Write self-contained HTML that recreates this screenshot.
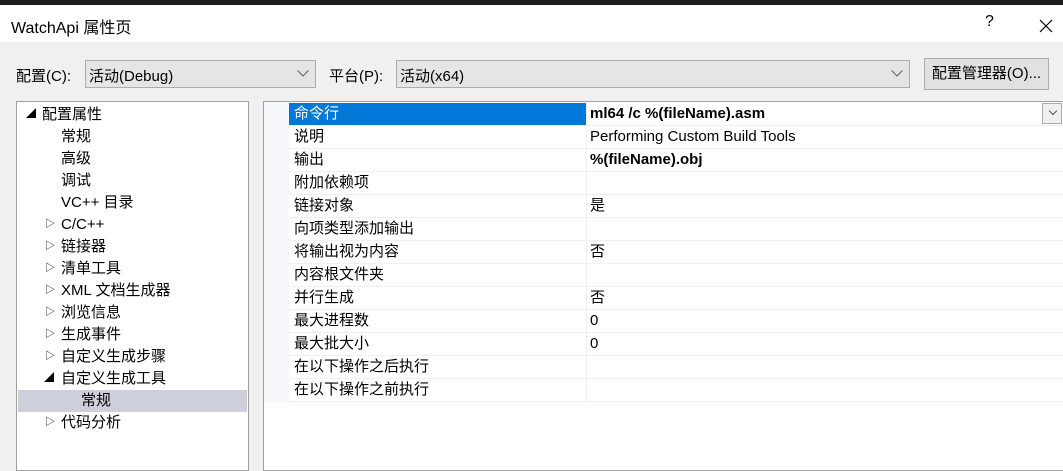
<!DOCTYPE html>
<html><head><meta charset="utf-8"><style>
*{margin:0;padding:0;box-sizing:border-box}
body{width:1063px;height:460px;overflow:hidden;background:#f0f0f0;position:relative;font-family:"Liberation Sans","Microsoft YaHei","Noto Sans CJK SC",sans-serif;font-size:15px;color:#000}
.a{position:absolute}
.top{left:0;top:0;width:1063px;height:5px;background:#1f1f1f}
.title{left:0;top:5px;width:1063px;height:37px;background:#fff}
.combo{background:#e5e5e5;border:1px solid #adadad;height:28px;top:60px}
.chev{position:absolute;right:8px;top:6px;width:8px;height:8px;border-right:1px solid #555;border-bottom:1px solid #555;transform:rotate(45deg)}
.tree{left:16px;top:101px;width:233px;height:370px;background:#fff;border:1px solid #a0a0a0}
.ti{position:absolute;left:0;height:22px;line-height:22px;width:229px;white-space:nowrap}
.grid{left:263px;top:101px;width:810px;height:370px;background:#fff;border:1px solid #a0a0a0}
.row{position:absolute;left:25px;width:780px;height:23px;border-bottom:1px solid #eef0f4;line-height:22px}
.n{position:absolute;left:5px}
.v{position:absolute;left:297px;top:0;height:22px;border-left:1px solid #eef0f4;padding-left:3px;width:480px}
</style></head><body>
<div class="a top"></div>
<div class="a title"><span class="a" style="left:11px;top:9px;font-size:16px">WatchApi 属性页</span>
<span class="a" style="left:985px;top:8px;font-size:16px">?</span>
<svg class="a" style="left:1039px;top:14px" width="14" height="14"><path d="M1 1L13 13M13 1L1 13" stroke="#000" stroke-width="1.2"/></svg></div>
<span class="a" style="left:16px;top:65px">配置(C):</span>
<div class="a combo" style="left:85px;width:231px"><span class="a" style="left:3px;top:4px">活动(Debug)</span><div class="chev"></div></div>
<span class="a" style="left:329px;top:65px">平台(P):</span>
<div class="a combo" style="left:396px;width:514px"><span class="a" style="left:3px;top:4px">活动(x64)</span><div class="chev"></div></div>
<div class="a" style="left:924px;top:58px;width:125px;height:32px;background:#e1e1e1;border:1px solid #adadad;text-align:center;line-height:30px">配置管理器(O)...</div>
<div class="a tree">
<div class="ti" style="top:2px"><span class="a" style="left:9px;top:0;font-size:10px">◢</span><span class="a" style="left:25px">配置属性</span></div>
<div class="ti" style="top:24px"><span class="a" style="left:44px">常规</span></div>
<div class="ti" style="top:46px"><span class="a" style="left:44px">高级</span></div>
<div class="ti" style="top:68px"><span class="a" style="left:44px">调试</span></div>
<div class="ti" style="top:90px"><span class="a" style="left:44px">VC++ 目录</span></div>
<div class="ti" style="top:112px"><span class="a" style="left:28px;font-size:10px">▷</span><span class="a" style="left:44px">C/C++</span></div>
<div class="ti" style="top:134px"><span class="a" style="left:28px;font-size:10px">▷</span><span class="a" style="left:44px">链接器</span></div>
<div class="ti" style="top:156px"><span class="a" style="left:28px;font-size:10px">▷</span><span class="a" style="left:44px">清单工具</span></div>
<div class="ti" style="top:178px"><span class="a" style="left:28px;font-size:10px">▷</span><span class="a" style="left:44px">XML 文档生成器</span></div>
<div class="ti" style="top:200px"><span class="a" style="left:28px;font-size:10px">▷</span><span class="a" style="left:44px">浏览信息</span></div>
<div class="ti" style="top:222px"><span class="a" style="left:28px;font-size:10px">▷</span><span class="a" style="left:44px">生成事件</span></div>
<div class="ti" style="top:244px"><span class="a" style="left:28px;font-size:10px">▷</span><span class="a" style="left:44px">自定义生成步骤</span></div>
<div class="ti" style="top:266px"><span class="a" style="left:27px;font-size:10px">◢</span><span class="a" style="left:44px">自定义生成工具</span></div>
<div class="ti" style="top:288px;left:1px;background:#cdcfdb"><span class="a" style="left:63px">常规</span></div>
<div class="ti" style="top:310px"><span class="a" style="left:28px;font-size:10px">▷</span><span class="a" style="left:44px">代码分析</span></div>
</div>
<div class="a grid">
<div class="a" style="left:0;top:0;width:25px;height:300px;background:#f5f7fb"></div>
<div class="row" style="top:1px"><div class="a" style="left:0;top:0;width:297px;height:22px;background:#0078d7"></div><span class="n" style="color:#fff">命令行</span><span class="v" style="font-weight:bold">ml64 /c %(fileName).asm</span>
<div class="a" style="left:753px;top:0;width:20px;height:21px;border:1px solid #adadad;background:#f0f0f0"><div class="chev" style="right:5px;top:4px;width:6px;height:6px"></div></div></div>
<div class="row" style="top:24px"><span class="n">说明</span><span class="v">Performing Custom Build Tools</span></div>
<div class="row" style="top:47px"><span class="n">输出</span><span class="v" style="font-weight:bold">%(fileName).obj</span></div>
<div class="row" style="top:70px"><span class="n">附加依赖项</span><span class="v"></span></div>
<div class="row" style="top:93px"><span class="n">链接对象</span><span class="v">是</span></div>
<div class="row" style="top:116px"><span class="n">向项类型添加输出</span><span class="v"></span></div>
<div class="row" style="top:139px"><span class="n">将输出视为内容</span><span class="v">否</span></div>
<div class="row" style="top:162px"><span class="n">内容根文件夹</span><span class="v"></span></div>
<div class="row" style="top:185px"><span class="n">并行生成</span><span class="v">否</span></div>
<div class="row" style="top:208px"><span class="n">最大进程数</span><span class="v">0</span></div>
<div class="row" style="top:231px"><span class="n">最大批大小</span><span class="v">0</span></div>
<div class="row" style="top:254px"><span class="n">在以下操作之后执行</span><span class="v"></span></div>
<div class="row" style="top:277px"><span class="n">在以下操作之前执行</span><span class="v"></span></div>
</div>
</body></html>
